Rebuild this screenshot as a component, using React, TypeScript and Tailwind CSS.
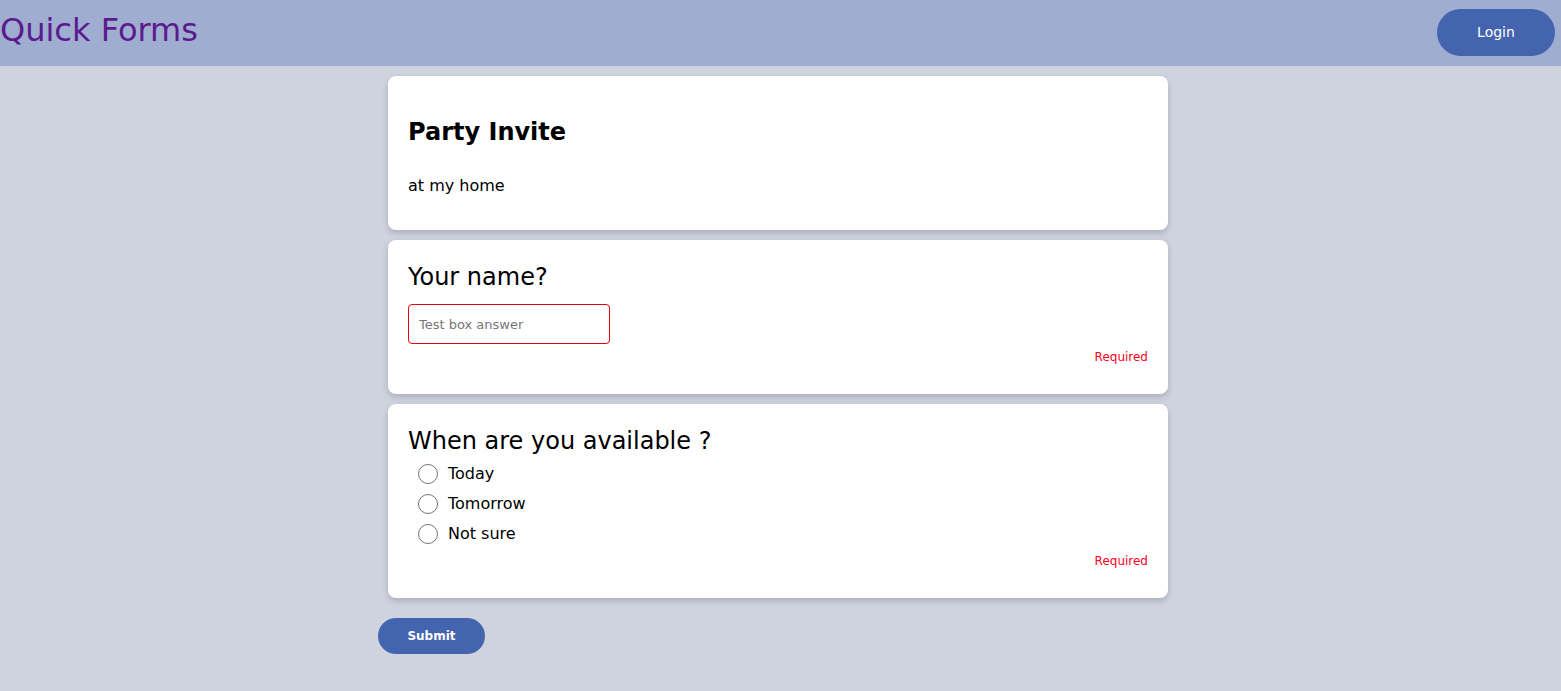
import React, { useState } from 'react';

type Option = { id: string; label: string };

const OPTIONS: Option[] = [
  { id: 'today', label: 'Today' },
  { id: 'tomorrow', label: 'Tomorrow' },
  { id: 'notsure', label: 'Not sure' },
];

const Card: React.FC<{ className?: string; children: React.ReactNode }> = ({ className = '', children }) => (
  <div className={`ml-[10px] w-[780px] bg-white rounded-lg shadow-[0_3px_6px_rgba(0,0,0,0.18)] px-5 ${className}`}>
    {children}
  </div>
);

const App: React.FC = () => {
  const [name, setName] = useState('');
  const [when, setWhen] = useState<string | null>(null);

  return (
    <div className="min-h-screen bg-[#cfd3de] font-['DejaVu_Sans',Verdana,sans-serif]">
      {/* Header */}
      <header className="h-[66px] bg-[#9faed0] flex justify-between items-start">
        <h1 className="pt-[12px] text-[32px] leading-[37px] text-[#5b1a8e]">Quick Forms</h1>
        <button className="mt-[9px] mr-[6px] h-[47px] w-[118px] rounded-full bg-[#4464b0] text-white text-[14px]">
          Login
        </button>
      </header>

      <div className="ml-[calc(50%-402.5px)] w-[800px] pt-[10px] flex flex-col gap-[10px]">
        {/* Title card */}
        <Card className="pt-[42px] pb-[32px]">
          <h2 className="text-[24px] leading-[28px] font-bold text-black">Party Invite</h2>
          <p className="mt-[28px] text-[16px] leading-[24px] text-black">at my home</p>
        </Card>

        {/* Text question */}
        <Card className="pt-[23px] pb-[29px]">
          <h3 className="text-[24px] leading-[28px] text-black">Your name?</h3>
          <input
            value={name}
            onChange={e => setName(e.target.value)}
            placeholder="Test box answer"
            className="mt-[13px] block w-[202px] h-[40px] border border-[#e8000f] rounded-[4px] px-[10px] text-[13px] text-black placeholder:text-[#777] outline-none"
          />
          <p className="mt-[5px] text-right text-[12px] leading-[16px] text-[#ff0022]">Required</p>
        </Card>

        {/* Radio question */}
        <Card className="pt-[23px] pb-[29px]">
          <h3 className="text-[24px] leading-[28px] text-black">When are you available ?</h3>
          <div className="mt-[4px] flex flex-col pl-[10px]">
            {OPTIONS.map(opt => (
              <label key={opt.id} className="h-[30px] flex items-center gap-[10px] cursor-pointer">
                <span
                  onClick={() => setWhen(opt.id)}
                  className="w-5 h-5 rounded-full border border-[#767676] bg-white flex items-center justify-center"
                >
                  {when === opt.id && <span className="w-[10px] h-[10px] rounded-full bg-[#4464b0]" />}
                </span>
                <span className="text-[16px] text-black" onClick={() => setWhen(opt.id)}>{opt.label}</span>
              </label>
            ))}
          </div>
          <p className="mt-[4px] text-right text-[12px] leading-[16px] text-[#ff0022]">Required</p>
        </Card>

        <div className="pt-[10px]">
          <button className="h-[36px] w-[107px] rounded-full bg-[#4464b0] text-white text-[12px] font-bold">
            Submit
          </button>
        </div>
      </div>
    </div>
  );
};

export default App;
